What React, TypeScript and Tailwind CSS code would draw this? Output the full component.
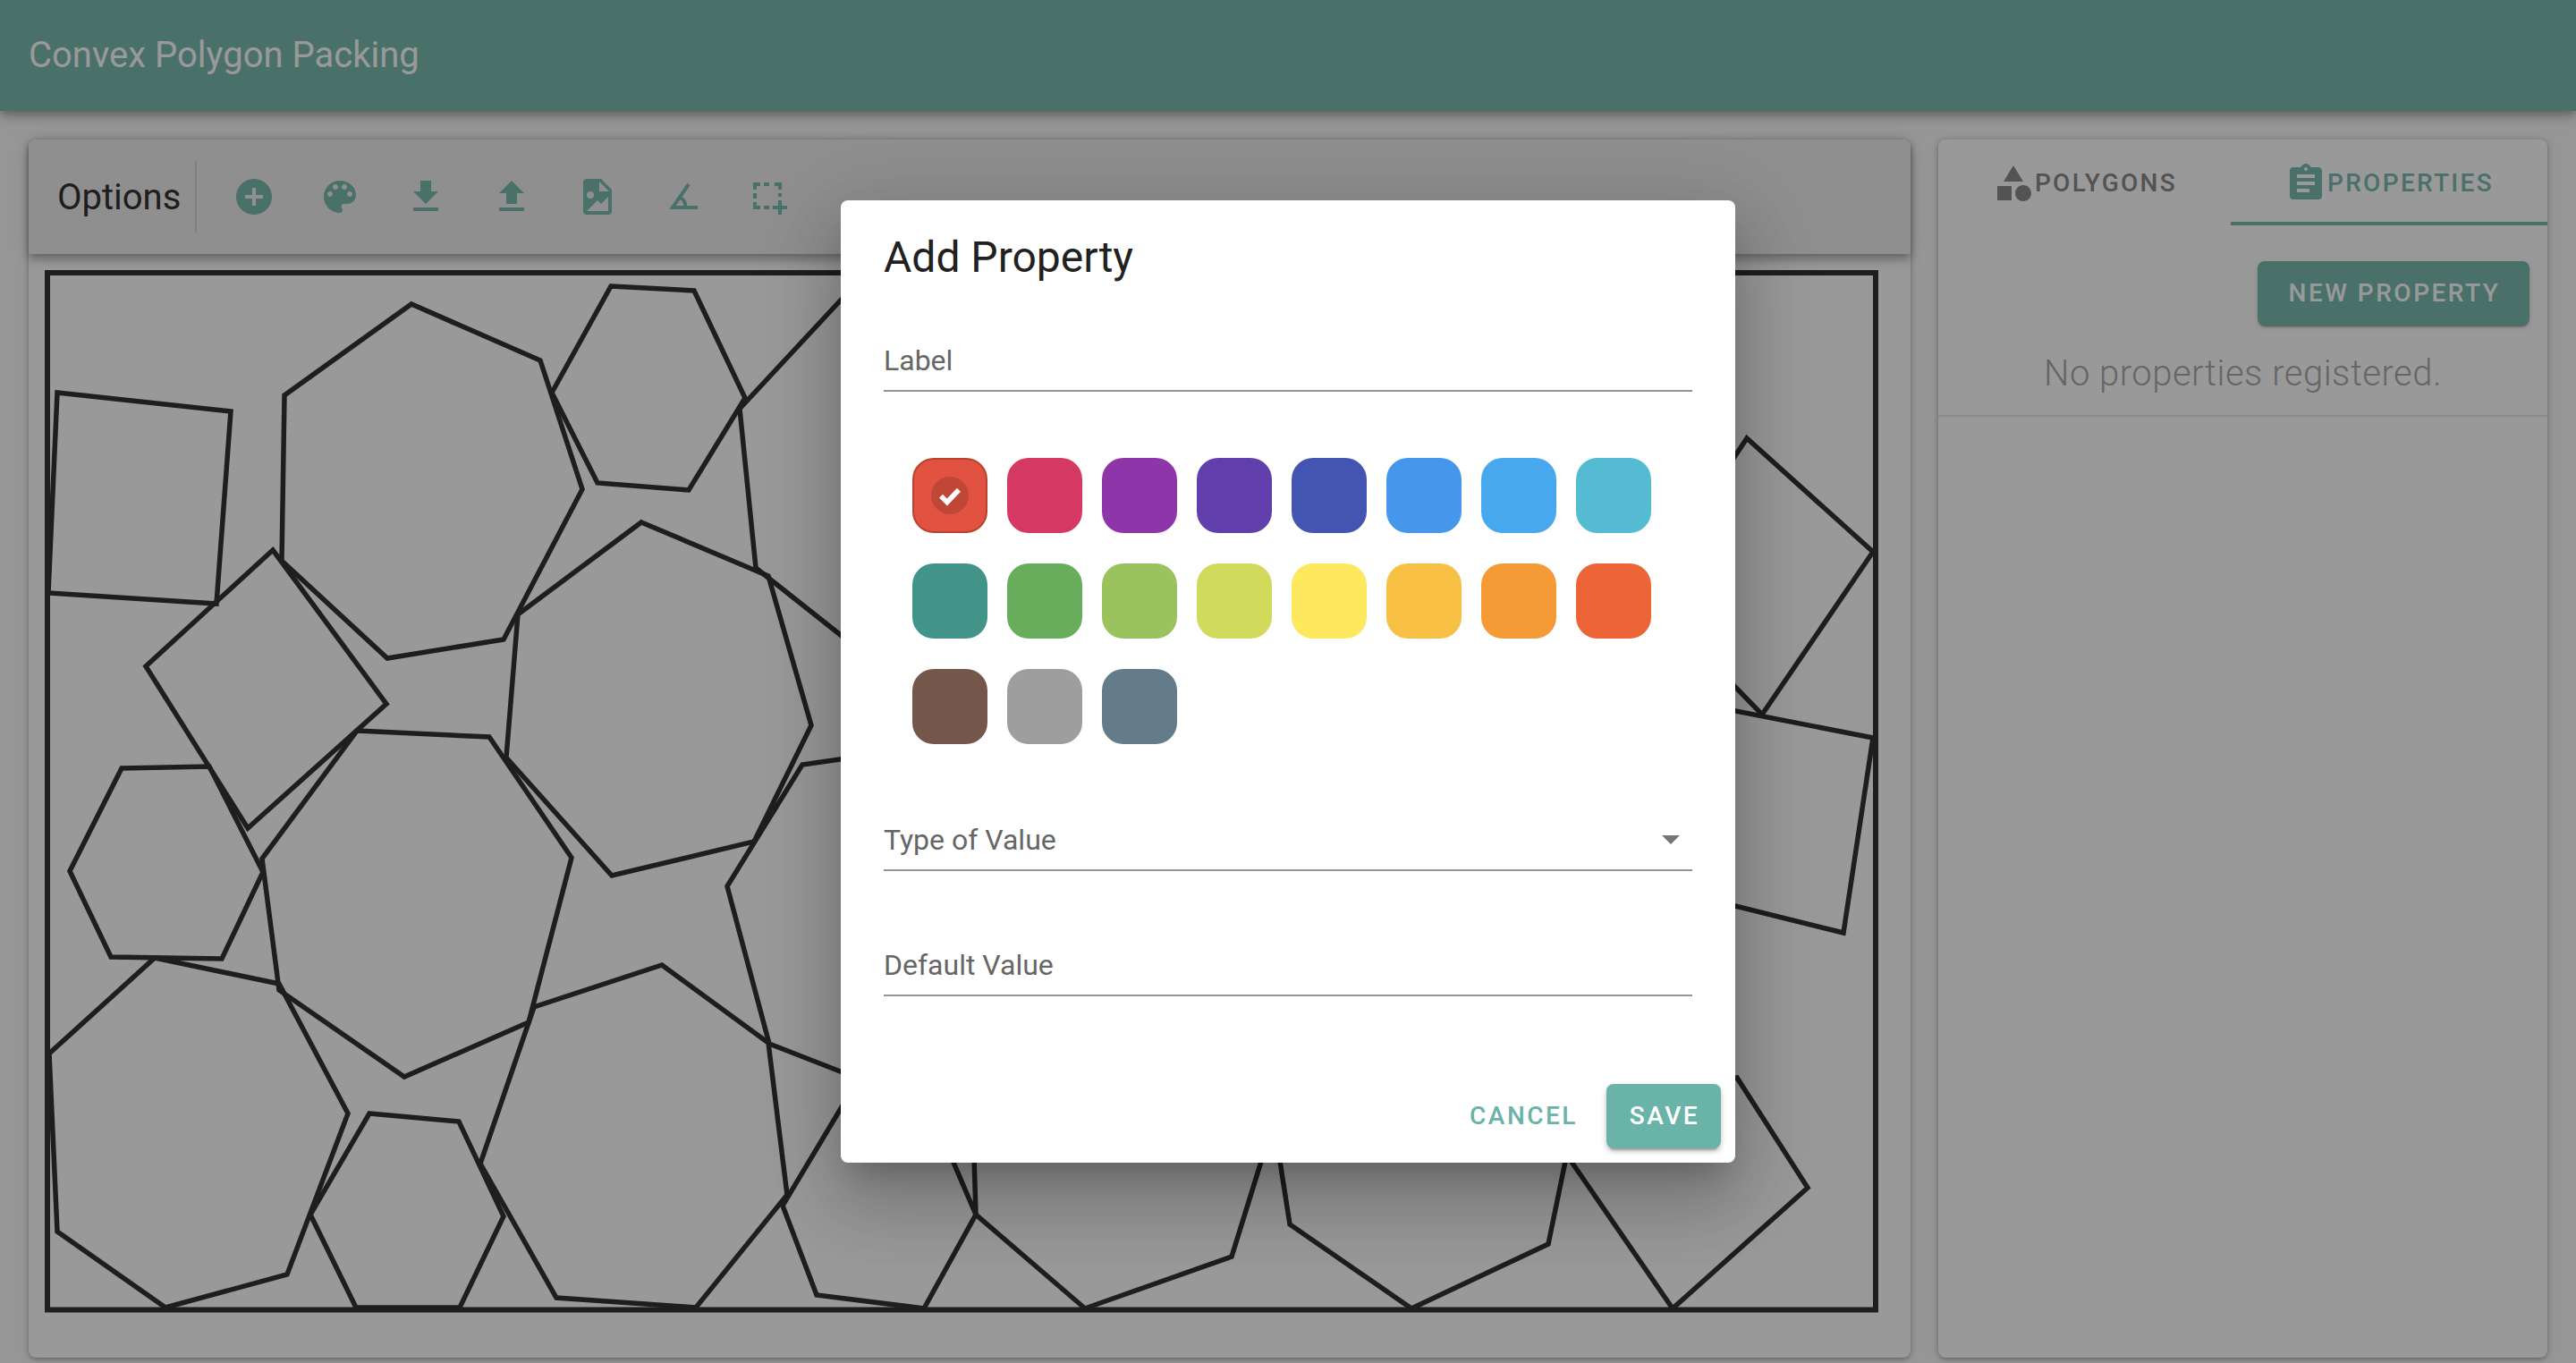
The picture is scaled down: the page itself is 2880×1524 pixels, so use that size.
import React from 'react';

const TEAL = '#7bbbaf';

const mdi = {
  addCircle: 'M12 2C6.48 2 2 6.48 2 12s4.48 10 10 10 10-4.48 10-10S17.52 2 12 2zm5 11h-4v4h-2v-4H7v-2h4V7h2v4h4v2z',
  palette:
    'M12 3c-4.97 0-9 4.03-9 9s4.03 9 9 9c.83 0 1.5-.67 1.5-1.5 0-.39-.15-.74-.39-1.01-.23-.26-.38-.61-.38-.99 0-.83.67-1.5 1.5-1.5H16c2.76 0 5-2.24 5-5 0-4.42-4.03-8-9-8zm-5.5 9c-.83 0-1.5-.67-1.5-1.5S5.67 9 6.5 9 8 9.67 8 10.5 7.33 12 6.5 12zm3-4C8.67 8 8 7.33 8 6.5S8.67 5 9.5 5s1.5.67 1.5 1.5S10.33 8 9.5 8zm5 0c-.83 0-1.5-.67-1.5-1.5S13.67 5 14.5 5s1.5.67 1.5 1.5S15.33 8 14.5 8zm3 4c-.83 0-1.5-.67-1.5-1.5S16.67 9 17.5 9s1.5.67 1.5 1.5-.67 1.5-1.5 1.5z',
  download: 'M19 9h-4V3H9v6H5l7 7 7-7zM5 18v2h14v-2H5z',
  upload: 'M9 16h6v-6h4l-7-7-7 7h4zm-4 2h14v2H5z',
  fileImage:
    'M13,9H18.5L13,3.5V9M6,2H14L20,8V20A2,2 0 0,1 18,22H6C4.89,22 4,21.1 4,20V4C4,2.89 4.89,2 6,2M6,20H15L18,20V12L14,16L12,14L6,20M8,9A2,2 0 0,0 6,11A2,2 0 0,0 8,13A2,2 0 0,0 10,11A2,2 0 0,0 8,9Z',
  angle:
    'M20,19H4.09L14.18,4.43L15.82,5.57L11.28,12.13C12.89,12.96 14,14.62 14,16.5C14,16.67 14,16.84 13.97,17H20V19M7.91,17H11.96C12,16.84 12,16.67 12,16.5C12,15.32 11.29,14.29 10.24,13.68L7.91,17Z',
  select:
    'M3 4h4v2H5v2H3zM9 4h3v2H9zM15 4h4v4h-2V6h-2zM3 10h2v3H3zM17 10h2v2h-2zM3 15h2v2h2v2H3zM9 17h3v2H9zM17 14h2v3h3v2h-3v3h-2v-3h-3v-2h3z',
  shape:
    'M11,13.5V21.5H3V13.5H11M12,2L17.5,11H6.5L12,2M17.5,13C20,13 22,15 22,17.5C22,20 20,22 17.5,22C15,22 13,20 13,17.5C13,15 15,13 17.5,13Z',
  clipboard:
    'M17,9H7V7H17M17,13H7V11H17M14,17H7V15H14M12,3A1,1 0 0,1 13,4A1,1 0 0,1 12,5A1,1 0 0,1 11,4A1,1 0 0,1 12,3M19,3H14.82C14.4,1.84 13.3,1 12,1C10.7,1 9.6,1.84 9.18,3H5A2,2 0 0,0 3,5V19A2,2 0 0,0 5,21H19A2,2 0 0,0 21,19V5C21,3.89 20.1,3 19,3Z',
};

const Icon = ({ d, color = TEAL }: { d: string; color?: string }) => (
  <svg viewBox="0 0 24 24" className="w-12 h-12 shrink-0" fill={color}>
    <path d={d} />
  </svg>
);

const closed = [
  '64,439 258,460 242,675 54,663',
  '460,340 604,403 651,547 563,715 433,736 315,627 318,442',
  '683,320 776,325 833,445 770,548 668,540 617,439',
  '305,615 432,787 277,926 163,745',
  '717,584 859,644 907,811 843,941 684,979 566,847 579,687',
  '136,859 234,857 294,975 248,1072 124,1070 78,974',
  '399,817 547,824 639,959 591,1143 452,1204 312,1107 293,960',
  '173,1071 312,1100 389,1245 321,1425 185,1462 64,1377 55,1178',
  '413,1245 513,1254 563,1360 514,1462 398,1462 347,1358',
  '740,1079 859,1166 880,1336 778,1462 622,1451 537,1301 597,1126',
  '1953,490 2094,617 1970,799 1880,706 1880,600',
  '2094,825 2061,1043 1940,1013 1900,1003 1900,787',
  '1425,1260 1442,1369 1578,1463 1731,1391 1758,1260',
  '1730,1260 1870,1463 2021,1328 1942,1205',
];

const open = [
  '960,314 827,457 845,635 960,726',
  '960,846 897,855 813,991 860,1167 960,1206',
  '960,1206 875,1348 913,1448 1033,1463 1091,1358 1088,1260',
  '1049,1260 1091,1358 1213,1463 1377,1405 1422,1260',
];

const swatches = [
  'bg-[#e15240] border-2 border-[#b9422f]', 'bg-[#d63864]', 'bg-[#8e35a9]', 'bg-[#6140ad]', 'bg-[#4355b0]', 'bg-[#4696ec]', 'bg-[#47a8ee]', 'bg-[#55bbd2]',
  'bg-[#429488]', 'bg-[#67ad5c]', 'bg-[#9ac25f]', 'bg-[#d1da5a]', 'bg-[#fee85e]', 'bg-[#f8c042]', 'bg-[#f49a36]', 'bg-[#ed6436]',
  'bg-[#74564a]', 'bg-[#9e9e9e]', 'bg-[#647b8a]',
];

export default function App() {
  return (
    <div className="relative w-[2880px] h-[1524px] overflow-hidden bg-[#fafafa] font-['Roboto',sans-serif] flex flex-col">
      <header className="h-[124px] shrink-0 bg-[#7bbbaf] flex items-center px-8 text-white text-[40px] shadow-[0_4px_8px_-2px_rgba(0,0,0,0.2),0_8px_10px_0_rgba(0,0,0,0.14),0_2px_20px_0_rgba(0,0,0,0.12)]">
        Convex Polygon Packing
      </header>

      <main className="flex gap-[31px] pl-8 pt-8">
        <section className="w-[2104px] h-[1362px] bg-white rounded-lg shadow-[0_2px_4px_-1px_rgba(0,0,0,0.2),0_1px_6px_0_rgba(0,0,0,0.14),0_1px_12px_0_rgba(0,0,0,0.12)]">
          <div className="relative h-[128px] bg-[#eeeeee] rounded-t-lg flex items-center shadow-[0_4px_8px_-2px_rgba(0,0,0,0.2),0_8px_10px_0_rgba(0,0,0,0.14),0_2px_20px_0_rgba(0,0,0,0.12)]">
            <span className="pl-8 pt-[2px] w-[186px] text-[40px] text-[#333333]">Options</span>
            <div className="w-[2px] h-[80px] bg-[#d6d6d6] mr-[40px]" />
            <div className="flex gap-[48px]">
              <Icon d={mdi.addCircle} />
              <Icon d={mdi.palette} />
              <Icon d={mdi.download} />
              <Icon d={mdi.upload} />
              <Icon d={mdi.fileImage} />
              <Icon d={mdi.angle} />
              <Icon d={mdi.select} />
            </div>
          </div>
          <svg viewBox="47 299 2056 1171" className="block w-[2056px] h-[1171px] ml-[15px] mt-[15px]" fill="none" stroke="#333333" strokeLinejoin="miter">
            <rect x="53" y="305" width="2044" height="1159.5" strokeWidth="6" />
            {closed.map(p => <polygon key={p} points={p} strokeWidth="5.5" />)}
            {open.map(p => <polyline key={p} points={p} strokeWidth="5.5" />)}
          </svg>
        </section>

        <section className="w-[681px] h-[1362px] bg-white rounded-lg shadow-[0_2px_4px_-1px_rgba(0,0,0,0.2),0_1px_6px_0_rgba(0,0,0,0.14),0_1px_12px_0_rgba(0,0,0,0.12)]">
          <div className="flex h-[96px] text-[28px] font-medium tracking-[2.3px]">
            <div className="w-[327px] pt-[2px] flex items-center justify-center text-[#8a8a8a]">
              <Icon d={mdi.shape} color="#8a8a8a" />
              <span>POLYGONS</span>
            </div>
            <div className="w-[354px] pt-[6px] flex items-center justify-center text-[#7bbbaf] border-b-4 border-[#7bbbaf]">
              <Icon d={mdi.clipboard} />
              <span>PROPERTIES</span>
            </div>
          </div>
          <div className="flex flex-col border-b-2 border-[#e8e8e8] h-[214px]">
            <div className="flex justify-end pr-5 pt-10">
              <button className="w-[304px] h-[72px] pl-[2px] rounded-lg bg-[#7bbbaf] text-white text-[28px] font-medium tracking-[2.5px] shadow-[0_2px_2px_0_rgba(0,0,0,0.14),0_3px_2px_-2px_rgba(0,0,0,0.2),0_2px_6px_0_rgba(0,0,0,0.12)]">
                NEW PROPERTY
              </button>
            </div>
            <p className="mt-[24px] text-center text-[40px] font-light tracking-[0.5px] text-[#aaaaaa]">No properties registered.</p>
          </div>
        </section>
      </main>

      <div className="absolute inset-0 bg-black/40 flex items-center justify-center">
        <div className="w-[1000px] h-[1076px] bg-white rounded-lg flex flex-col shadow-[0_22px_30px_-14px_rgba(0,0,0,0.2),0_48px_76px_6px_rgba(0,0,0,0.14),0_18px_92px_16px_rgba(0,0,0,0.12)]">
          <h2 className="px-12 pt-8 text-[48px] leading-[64px] text-[#212121]">Add Property</h2>

          <div className="mx-12 mt-[50px] h-[68px] border-b-2 border-[#949494] flex items-center text-[32px] text-[#666666]">Label</div>

          <div className="grid grid-cols-[repeat(8,84px)] gap-x-[22px] gap-y-[34px] mt-[74px] ml-20">
            {swatches.map((c, i) => (
              <div key={i} className={`w-[84px] h-[84px] rounded-[24px] flex items-center justify-center ${c}`}>
                {i === 0 && (
                  <div className="w-[42px] h-[42px] rounded-full bg-[#c04737] flex items-center justify-center">
                    <svg viewBox="0 0 24 24" className="w-[30px] h-[30px]" fill="none" stroke="white" strokeWidth="4.5">
                      <path d="M4 12.5l5.5 5.5L20 7" />
                    </svg>
                  </div>
                )}
              </div>
            ))}
          </div>

          <div className="mx-12 mt-[74px] h-[68px] border-b-2 border-[#949494] flex items-center justify-between text-[32px] text-[#666666]">
            <span>Type of Value</span>
            <svg viewBox="0 0 20 10" className="w-5 h-2.5 mr-[14px]" fill="#757575"><path d="M0 0h20L10 10z" /></svg>
          </div>

          <div className="mx-12 mt-[72px] h-[68px] border-b-2 border-[#949494] flex items-center text-[32px] text-[#666666]">Default Value</div>

          <div className="mt-auto pr-4 pb-4 flex items-center justify-end">
            <button className="mr-[32px] text-[28px] font-medium tracking-[2.5px] text-[#69b3a9]">CANCEL</button>
            <button className="w-[128px] h-[72px] pl-[2px] rounded-lg bg-[#69b3a9] text-white text-[28px] font-medium tracking-[2.5px] shadow-[0_6px_2px_-4px_rgba(0,0,0,0.2),0_4px_4px_0_rgba(0,0,0,0.14),0_2px_10px_0_rgba(0,0,0,0.12)]">SAVE</button>
          </div>
        </div>
      </div>
    </div>
  );
}
